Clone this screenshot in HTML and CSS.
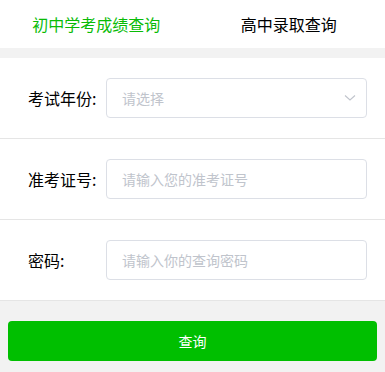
FILE: index.html
```html
<!DOCTYPE html>
<html lang="zh">
<head>
<meta charset="utf-8">
<link rel="stylesheet" href="styles.css">
</head>
<body>
<div class="tabs">
  <div class="tab active">初中学考成绩查询</div>
  <div class="tab">高中录取查询</div>
</div>
<div class="form">
  <div class="row">
    <div class="label">考试年份:</div>
    <div class="input select">
      <span class="ph">请选择</span>
      <svg class="arrow" width="12" height="8" viewBox="0 0 12 8"><path d="M1 1.5 L6 6 L11 1.5" fill="none" stroke="#c0c4cc" stroke-width="1.1"/></svg>
    </div>
  </div>
  <div class="row">
    <div class="label">准考证号:</div>
    <div class="input"><span class="ph">请输入您的准考证号</span></div>
  </div>
  <div class="row last">
    <div class="label">密码:</div>
    <div class="input"><span class="ph">请输入你的查询密码</span></div>
  </div>
</div>
<div class="footer">
  <button class="btn">查询</button>
</div>
</body>
</html>
```
FILE: styles.css
```css
html, body {
  margin: 0;
  padding: 0;
  background: #f2f2f2;
  font-family: "Noto Sans CJK SC", "Noto Sans", sans-serif;
}
.tabs {
  display: flex;
  height: 48px;
  background: #fff;
  margin-bottom: 10px;
}
.tab {
  flex: 1;
  display: flex;
  align-items: center;
  justify-content: center;
  font-size: 16px;
  color: #000;
}
.tab.active {
  color: #09bb07;
}
.form {
  background: #fff;
}
.row {
  display: flex;
  align-items: center;
  height: 80px;
  padding: 0 18px 0 28px;
  border-bottom: 1px solid #e5e5e5;
}
.row.last {
  border-bottom: 1px solid #e5e5e5;
}
.label {
  width: 78px;
  flex: none;
  font-size: 16px;
  color: #000;
}
.input {
  flex: 1;
  height: 38px;
  border: 1px solid #dcdfe6;
  border-radius: 4px;
  display: flex;
  align-items: center;
  padding: 0 15px;
  box-sizing: content-box;
}
.ph {
  font-size: 14px;
  color: #c0c4cc;
  flex: 1;
}
.arrow {
  flex: none;
  margin-right: -5px;
}
.footer {
  padding: 20px 8px;
}
.btn {
  display: block;
  width: 100%;
  height: 40px;
  border: none;
  border-radius: 4px;
  background: #00bf00;
  color: #fff;
  font-family: "Noto Sans CJK SC", "Noto Sans", sans-serif;
  font-size: 14px;
  padding: 0;
}
```
